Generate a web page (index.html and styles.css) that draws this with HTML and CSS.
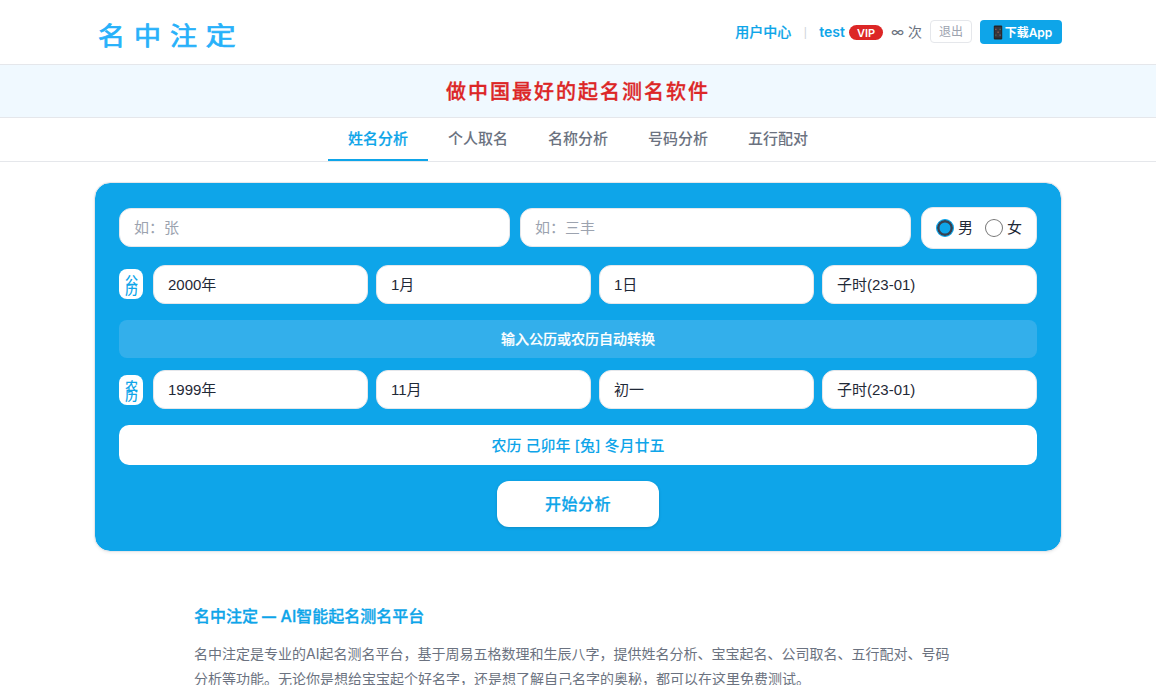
FILE: index.html
```html
<!DOCTYPE html>
<html lang="zh-CN">
<head>
<meta charset="utf-8">
<title>名中注定</title>
<link rel="stylesheet" href="styles.css">
</head>
<body>
<header class="header">
  <div class="header-inner">
    <div class="logo"><span>名</span><span>中</span><span>注</span><span class="wide">定</span></div>
    <div class="user">
      <a class="center">用户中心</a>
      <span class="divider">|</span>
      <a class="name">test</a>
      <span class="vip">VIP</span>
      <span class="times">∞ 次</span>
      <button class="logout">退出</button>
      <a class="download"><svg class="phone" viewBox="0 0 10 16"><rect x="0.5" y="0.5" width="9" height="15" rx="1.2" fill="#242424"/><rect x="1.4" y="2" width="7.2" height="11.5" fill="#39343b"/><path d="M2 4h1.4v1.4H2zM4.4 7h1.4v1.4H4.4z" fill="#91604f"/><path d="M6.5 4H8v1.4H6.5zM2 10h1.4v1.4H2z" fill="#4b7052"/><path d="M6.5 10H8v1.4H6.5z" fill="#596c91"/></svg><span>下载App</span></a>
    </div>
  </div>
</header>
<div class="slogan">做中国最好的起名测名软件</div>
<nav class="tabs">
  <a class="tab active">姓名分析</a>
  <a class="tab">个人取名</a>
  <a class="tab">名称分析</a>
  <a class="tab">号码分析</a>
  <a class="tab">五行配对</a>
</nav>
<main class="card">
  <div class="row names">
    <input class="field" placeholder="如：张">
    <input class="field" placeholder="如：三丰">
    <div class="gender">
      <span class="radio checked"></span><span class="male">男</span>
      <span class="radio"></span><span>女</span>
    </div>
  </div>
  <div class="row dates">
    <div class="label raised">公<br>历</div>
    <div class="selects">
      <div class="field">2000年</div>
      <div class="field">1月</div>
      <div class="field">1日</div>
      <div class="field">子时(23-01)</div>
    </div>
  </div>
  <div class="hint">输入公历或农历自动转换</div>
  <div class="row dates">
    <div class="label">农<br>历</div>
    <div class="selects">
      <div class="field">1999年</div>
      <div class="field">11月</div>
      <div class="field">初一</div>
      <div class="field">子时(23-01)</div>
    </div>
  </div>
  <div class="result">农历 己卯年 [兔] 冬月廿五</div>
  <button class="submit">开始分析</button>
</main>
<section class="intro">
  <h2>名中注定 <span class="dash">—</span> AI智能起名测名平台</h2>
  <p>名中注定是专业的AI起名测名平台，基于周易五格数理和生辰八字，提供姓名分析、宝宝起名、公司取名、五行配对、号码分析等功能。无论你是想给宝宝起个好名字，还是想了解自己名字的奥秘，都可以在这里免费测试。</p>
</section>
</body>
</html>
```
FILE: styles.css
```css
* { box-sizing: border-box; }
html { overflow: hidden; }
body {
  margin: 0;
  height: 685px;
  overflow: hidden;
  background: #fff;
  color: #1f2937;
  font-family: Inter, "Noto Sans CJK SC", sans-serif;
}
button { font-family: inherit; }
.header { height: 65px; border-bottom: 1px solid #e5e7eb; }
.header-inner {
  width: 968px;
  height: 64px;
  margin: 0 auto;
  display: flex;
  align-items: center;
  justify-content: space-between;
}
.logo {
  display: flex;
  gap: 9px;
  padding: 10px 0 0 4px;
  color: #27b1fa;
  font-size: 27px;
  line-height: 30px;
  font-weight: 400;
}
.logo span {
  transform: scaleY(0.92);
  -webkit-text-stroke: 0.8px #27b1fa;
}
.logo .wide { transform: translateX(1px) scale(1.12, 0.92); }
.user { display: flex; align-items: center; font-size: 14px; line-height: 20px; }
.center {
  color: #0ea5e9;
  font-weight: 500;
  -webkit-text-stroke: 0.2px #0ea5e9;
}
.name { color: #0ea5e9; font-weight: 600; }
.divider {
  width: 28px;
  color: #d1d5db;
  font-family: "Liberation Sans", sans-serif;
  font-size: 12px;
  text-align: center;
}
.vip {
  width: 34px;
  height: 15px;
  margin: 1px 8px 0 4px;
  border-radius: 8px;
  background: #dc2626;
  color: #fff;
  font-size: 11px;
  line-height: 16px;
  font-weight: 600;
  text-align: center;
}
.times { color: #6b7280; }
.logout {
  width: 42px;
  height: 23px;
  margin: 0 8px 1px;
  padding: 0;
  border: 1px solid #e5e7eb;
  border-radius: 4px;
  background: #fff;
  color: #9ca3af;
  font-size: 12px;
  line-height: 20px;
}
.download {
  display: flex;
  align-items: center;
  justify-content: center;
  width: 82px;
  height: 24px;
  border-radius: 4px;
  background: #0ea5e9;
  color: #fff;
  font-size: 12px;
  font-weight: 600;
}
.download span { padding-top: 2px; }
.phone { width: 10px; height: 15px; margin: 0 2px 0 3px; }
.slogan {
  height: 53px;
  padding-top: 1px;
  border-bottom: 1px solid #e5e7eb;
  background: #f0f9ff;
  color: #dc2626;
  font-size: 20px;
  line-height: 52px;
  font-weight: 500;
  letter-spacing: 2px;
  text-align: center;
  -webkit-text-stroke: 0.3px #dc2626;
}
.tabs {
  display: flex;
  justify-content: center;
  height: 44px;
  border-bottom: 1px solid #e5e7eb;
}
.tab {
  width: 100px;
  border-bottom: 2px solid transparent;
  color: #6b7280;
  font-size: 15px;
  line-height: 41px;
  font-weight: 500;
  text-align: center;
}
.active {
  border-color: #0ea5e9;
  color: #0ea5e9;
  -webkit-text-stroke: 0.2px #0ea5e9;
}
.card {
  width: 968px;
  height: 370px;
  margin: 20px auto 0;
  padding: 24px;
  border: 1px solid #e5e7eb;
  border-radius: 16px;
  background: #0ea5e9;
  background-clip: padding-box;
  box-shadow: 0 1px 3px rgba(0, 0, 0, 0.06);
}
.row { display: flex; align-items: center; gap: 10px; }
.names { height: 42px; margin-bottom: 16px; }
.names .field { margin-bottom: 1px; }
.dates { height: 39px; }
.field {
  flex: 1;
  min-width: 0;
  height: 39px;
  padding: 0 14px;
  border: 1px solid #e5e7eb;
  border-radius: 12px;
  background: #fff;
  color: #1f2937;
  font: 15px/37px "Liberation Sans", "Noto Sans CJK SC", sans-serif;
}
.field::placeholder { color: #9ca3af; }
.gender {
  display: flex;
  align-items: center;
  width: 116px;
  height: 42px;
  padding: 0 14px;
  border: 1px solid #e5e7eb;
  border-radius: 12px;
  background: #fff;
  font-size: 15px;
  line-height: 20px;
}
.radio {
  width: 18px;
  height: 18px;
  margin-right: 4px;
  border: 1px solid #777;
  border-radius: 50%;
}
.checked {
  border: 1px solid #0ea5e9;
  background: #0ea5e9;
  box-shadow: inset 0 0 0 2.5px #374151;
}
.male { margin-right: 12px; }
.label {
  width: 24px;
  height: 30px;
  padding: 7px 0 0 1px;
  border-radius: 8px;
  background: #fff;
  color: #0ea5e9;
  font-size: 13px;
  line-height: 9px;
  font-weight: 500;
  text-align: center;
}
.raised { margin-bottom: 1px; }
.selects { display: flex; flex: 1; gap: 8px; }
.hint {
  height: 38px;
  margin: 16px 0 12px;
  border-radius: 8px;
  background: #33afeb;
  color: #fff;
  font-size: 14px;
  line-height: 38px;
  font-weight: 500;
  text-align: center;
  -webkit-text-stroke: 0.2px #fff;
}
.result {
  height: 40px;
  margin: 16px 0;
  border-radius: 10px;
  background: #fff;
  color: #0ea5e9;
  font-size: 15px;
  line-height: 41px;
  font-weight: 500;
  text-align: center;
}
.submit {
  display: block;
  width: 162px;
  height: 46px;
  margin: 0 auto;
  padding: 0 0 2px;
  border: 0;
  border-radius: 12px;
  background: #fff;
  box-shadow: 0 1px 3px rgba(0, 0, 0, 0.15);
  color: #0ea5e9;
  font-size: 16px;
  font-weight: 500;
  letter-spacing: 0.5px;
  -webkit-text-stroke: 0.25px #0ea5e9;
}
.intro { width: 768px; margin: 52px auto 0; }
.intro h2 {
  margin: 0 0 13px;
  color: #0ea5e9;
  font-size: 16px;
  line-height: 24px;
  font-weight: 500;
  -webkit-text-stroke: 0.3px #0ea5e9;
}
.dash {
  display: inline-block;
  margin-right: -2px;
  transform: scaleX(0.87);
  transform-origin: left;
}
.intro p { margin: 0; color: #6b7280; font-size: 14px; line-height: 25.2px; }
```
